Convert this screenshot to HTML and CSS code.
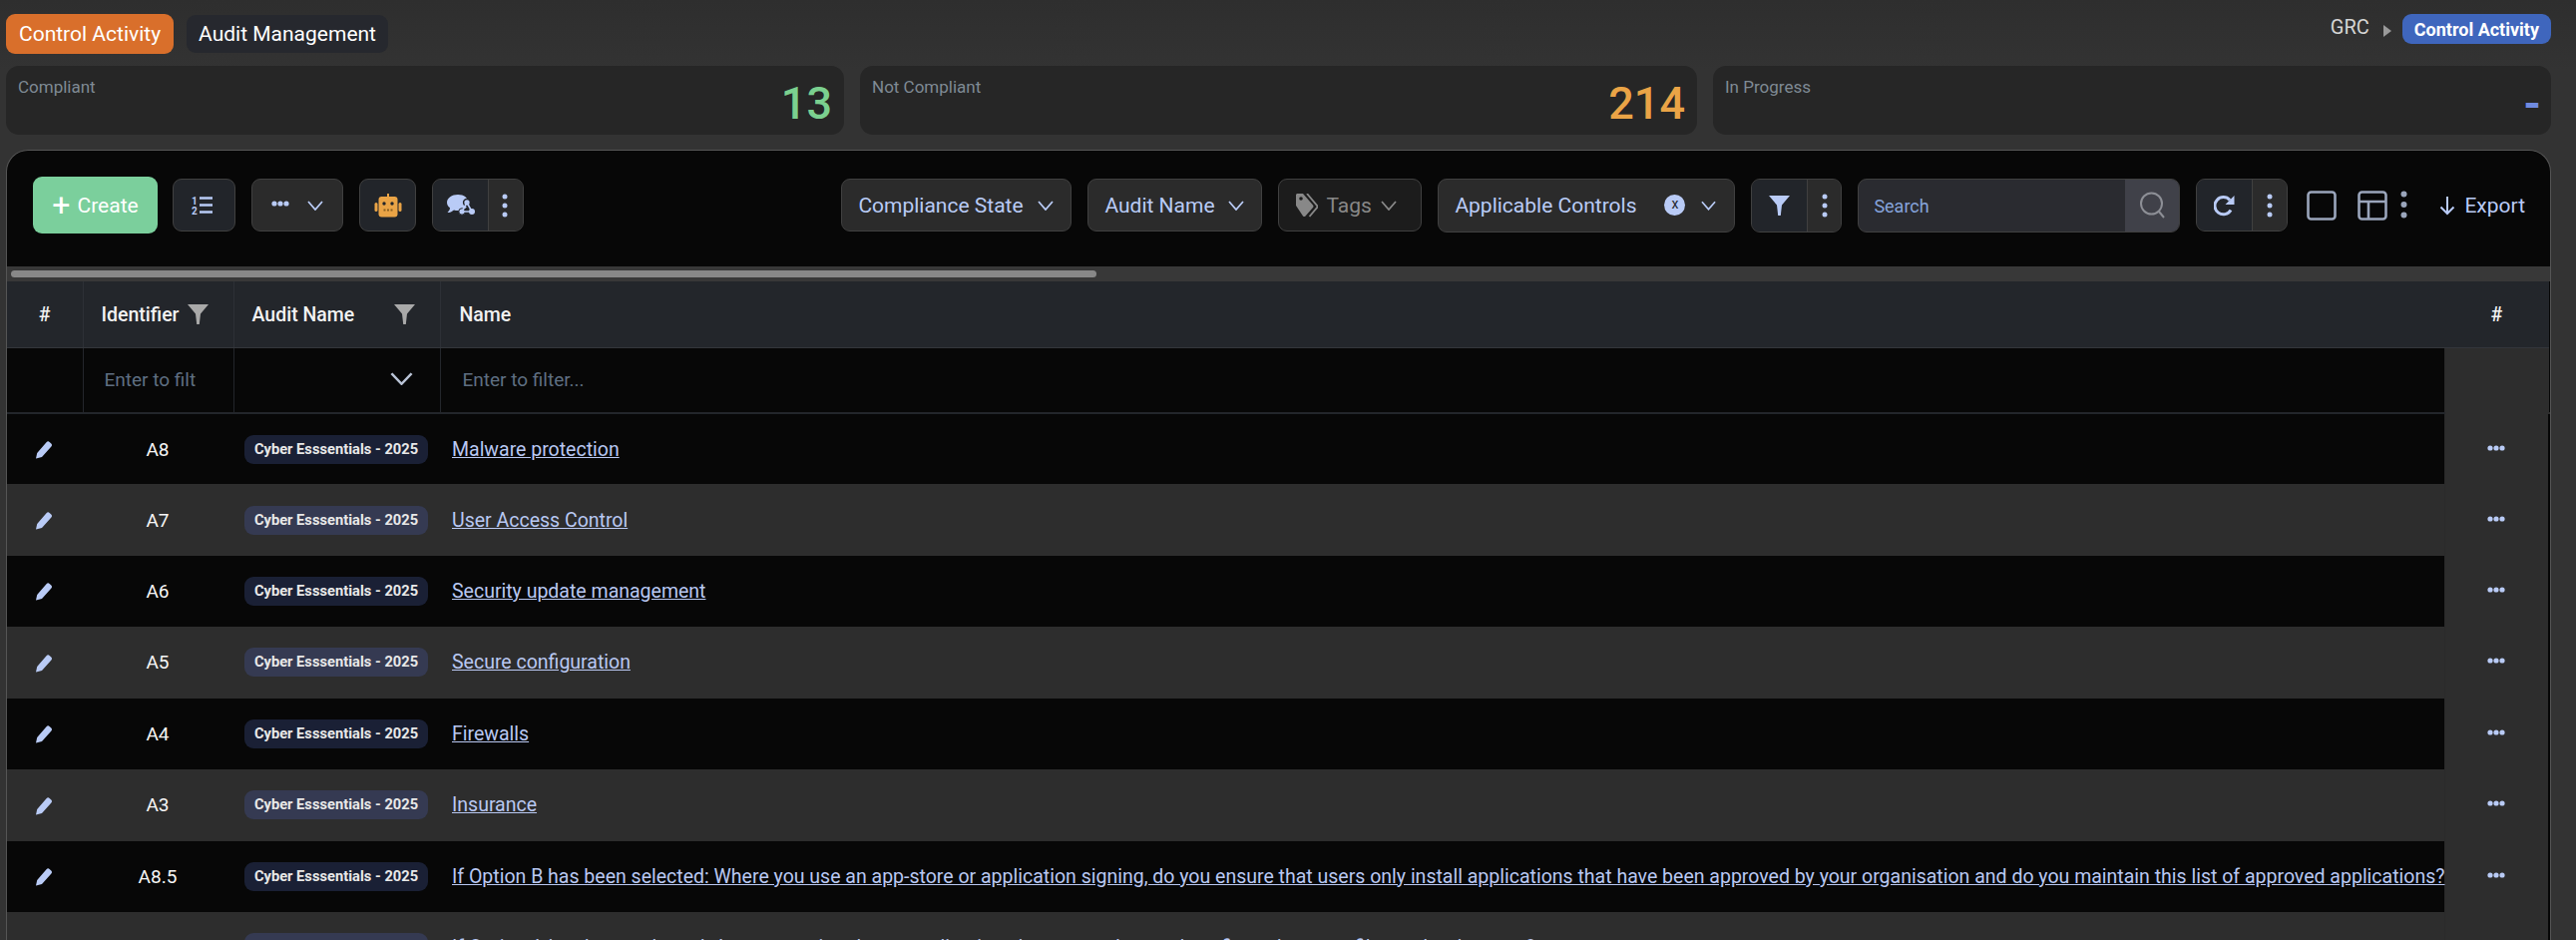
FILE: index.html
```html
<!DOCTYPE html>
<html lang="en">
<head>
<meta charset="utf-8">
<title>Control Activity</title>
<link rel="stylesheet" href="styles.css">
</head>
<body>
<svg class="defs" width="0" height="0" aria-hidden="true">
  <defs>
    <symbol id="chev" viewBox="0 0 16 10"><path d="M1 1l7 8 7-8" fill="none" stroke="currentColor" stroke-width="1.8"/></symbol>
    <symbol id="funnel" viewBox="0 0 21 20"><path d="M0 0h21l-8 9.5-1.2 10.500h-2.600L8 9.500z" fill="currentColor"/></symbol>
    <symbol id="pencil" viewBox="0 0 18 18"><path d="M1 17.500l1.200-5.500L11.500 1.200c.9-1 2.200-1.100 3.100-.3l1.700 1.500c.9.8 1 2.100.1 3.100L7 16z" fill="currentColor"/></symbol>
    <symbol id="dots3" viewBox="0 0 6 24"><circle cx="3" cy="3" r="2.500" fill="currentColor"/><circle cx="3" cy="12" r="2.500" fill="currentColor"/><circle cx="3" cy="21" r="2.500" fill="currentColor"/></symbol>
    <symbol id="dotsh" viewBox="0 0 18 6"><circle cx="3" cy="3" r="2.600" fill="currentColor"/><circle cx="9" cy="3" r="2.600" fill="currentColor"/><circle cx="15" cy="3" r="2.600" fill="currentColor"/></symbol>
  </defs>
</svg>

<header class="topbar">
  <nav class="tabs">
    <span class="tab tab-active">Control Activity</span>
    <span class="tab">Audit Management</span>
  </nav>
  <div class="crumbs">
    <span class="crumb-root">GRC</span>
    <span class="crumb-arrow"></span>
    <span class="crumb-current">Control Activity</span>
  </div>
</header>

<section class="cards">
  <div class="card"><span class="card-label">Compliant</span><span class="card-value green">13</span></div>
  <div class="card"><span class="card-label">Not Compliant</span><span class="card-value orange">214</span></div>
  <div class="card"><span class="card-label">In Progress</span><span class="card-value blue">-</span></div>
</section>

<main class="panel">
  <div class="toolbar">
    <div class="tool-group">
      <button class="create"><span class="plus">+</span>Create</button>
      <button class="btn btn-dark btn-list">
        <svg width="22" height="20" viewBox="0 0 22 20"><text x="0" y="8.500" class="num">1</text><text x="0" y="19" class="num">2</text><path d="M8 2.500h13M8 9.500h13M8 16.500h13" stroke="currentColor" stroke-width="2.600"/></svg>
      </button>
      <button class="btn btn-more">
        <svg class="dh" width="18" height="6"><use href="#dotsh"/></svg>
        <svg width="16" height="10"><use href="#chev"/></svg>
      </button>
      <button class="btn btn-dark btn-robot">
        <svg width="28" height="24" viewBox="0 0 28 24"><rect x="13" y="0" width="2" height="4" fill="#eaa446"/><rect x="4.500" y="3" width="19" height="20.500" rx="3" fill="#eaa446"/><rect x="0.500" y="9" width="3" height="9" rx="1.500" fill="#eaa446"/><rect x="24.500" y="9" width="3" height="9" rx="1.500" fill="#eaa446"/><circle cx="10" cy="10" r="1.700" fill="#22252a"/><circle cx="18" cy="10" r="1.700" fill="#22252a"/><path d="M9.500 16.500h9" stroke="#8a5f20" stroke-width="2" stroke-dasharray="2 1.500"/></svg>
      </button>
      <div class="split">
        <button class="split-main split-chat">
          <svg width="28" height="21" viewBox="0 0 28 21"><path d="M11 0c6 0 10.500 3.500 10.500 8s-4.500 8-10.500 8c-1.500 0-2.800-.2-4-.6C5 17 3 18 .5 18 2 16.500 3 15 3 13.300 1.200 11.900 0 10.100 0 8 0 3.500 5 0 11 0z" fill="currentColor"/><circle cx="20" cy="8" r="3.400" fill="currentColor" stroke="#22252a" stroke-width="1.500"/><circle cx="15" cy="17" r="3.200" fill="currentColor" stroke="#22252a" stroke-width="1"/><circle cx="25" cy="17" r="3" fill="currentColor"/><path d="M20 8l-5 9h10z" fill="none" stroke="currentColor" stroke-width="1.600"/></svg>
        </button>
        <button class="split-more"><svg width="6" height="24"><use href="#dots3"/></svg></button>
      </div>
    </div>

    <div class="tool-group">
      <button class="select sel-state">Compliance State<svg width="16" height="10"><use href="#chev"/></svg></button>
      <button class="select sel-audit">Audit Name<svg width="16" height="10"><use href="#chev"/></svg></button>
      <button class="select sel-tags">
        <svg class="tag-icon" width="22" height="24" viewBox="0 0 22 24"><path d="M0 1.500C0 .7.700 0 1.500 0H7l10 11.500c.7.800.7 1.800 0 2.500l-7.500 8.500c-.7.800-1.800.8-2.500 0L0 12z" fill="currentColor"/><path d="M11 0l10 11.800c.7.800.7 1.600 0 2.400l-7.500 8.800" fill="none" stroke="currentColor" stroke-width="1.800"/><circle cx="5" cy="5" r="1.800" fill="#1c1c1c"/></svg>
        Tags<svg width="16" height="10"><use href="#chev"/></svg>
      </button>
      <button class="select sel-applicable">
        <span>Applicable Controls</span>
        <span class="clear">x</span>
        <svg width="15" height="10"><use href="#chev"/></svg>
      </button>
      <div class="split split-filter">
        <button class="split-main"><svg width="21" height="20"><use href="#funnel"/></svg></button>
        <button class="split-more"><svg width="6" height="24"><use href="#dots3"/></svg></button>
      </div>
      <div class="search">
        <input class="search-input" type="text" placeholder="Search">
        <button class="search-btn"><svg width="27" height="27" viewBox="0 0 27 27"><circle cx="12.500" cy="12" r="10.500" fill="none" stroke="currentColor" stroke-width="2"/><path d="M20 20l5 6" stroke="currentColor" stroke-width="2"/></svg></button>
      </div>
      <div class="split">
        <button class="split-main">
          <svg width="21" height="22" viewBox="0 0 21 22"><path d="M17 15.500A8.600 8.600 0 1 1 16 5.500" fill="none" stroke="currentColor" stroke-width="3"/><path d="M20.500 1v9h-9z" fill="currentColor"/></svg>
        </button>
        <button class="split-more"><svg width="6" height="24"><use href="#dots3"/></svg></button>
      </div>
      <div class="view-tools">
        <svg width="30" height="30" viewBox="0 0 30 30"><rect x="1.500" y="1.500" width="27" height="27" rx="3" fill="none" stroke="currentColor" stroke-width="2.600"/></svg>
        <svg class="view-layout" width="30" height="30" viewBox="0 0 30 30"><rect x="1.500" y="1.500" width="27" height="27" rx="3" fill="none" stroke="currentColor" stroke-width="2.600"/><path d="M1.500 11h27M11 11v17" fill="none" stroke="currentColor" stroke-width="2.600"/></svg>
        <svg class="view-dots" width="7" height="28" viewBox="0 0 7 28"><circle cx="3.500" cy="3.500" r="3" fill="currentColor"/><circle cx="3.500" cy="14" r="3" fill="currentColor"/><circle cx="3.500" cy="24.500" r="3" fill="currentColor"/></svg>
      </div>
      <button class="export">
        <svg width="16" height="20" viewBox="0 0 16 20"><path d="M8 1v17M1.500 11.500L8 18l6.500-6.500" fill="none" stroke="currentColor" stroke-width="2"/></svg>
        Export
      </button>
    </div>
  </div>

  <div class="scrolltrack"><div class="scrollthumb"></div></div>

  <table class="grid">
    <colgroup>
      <col class="c-edit"><col class="c-id"><col class="c-audit"><col class="c-name"><col class="c-menu">
    </colgroup>
    <thead>
      <tr class="head">
        <th>#</th>
        <th class="th-left th-id"><span>Identifier</span><svg width="21" height="20"><use href="#funnel"/></svg></th>
        <th class="th-left th-audit"><span>Audit Name</span><svg width="21" height="20"><use href="#funnel"/></svg></th>
        <th class="th-left th-name">Name</th>
        <th class="th-menu">#</th>
      </tr>
      <tr class="filter">
        <td></td>
        <td><input class="filter-input" type="text" placeholder="Enter to filt"></td>
        <td class="filter-select"><svg width="23" height="13" viewBox="0 0 16 10" preserveAspectRatio="none"><use href="#chev"/></svg></td>
        <td><input class="filter-input filter-name" type="text" placeholder="Enter to filter..."></td>
        <td class="menu"></td>
      </tr>
    </thead>
    <tbody>
      <tr><td class="edit"><svg width="18" height="18"><use href="#pencil"/></svg></td><td class="ident">A8</td><td class="audit"><span class="pill">Cyber Esssentials - 2025</span></td><td class="name"><a href="#">Malware protection</a></td><td class="menu"><svg width="18" height="6"><use href="#dotsh"/></svg></td></tr>
      <tr><td class="edit"><svg width="18" height="18"><use href="#pencil"/></svg></td><td class="ident">A7</td><td class="audit"><span class="pill">Cyber Esssentials - 2025</span></td><td class="name"><a href="#">User Access Control</a></td><td class="menu"><svg width="18" height="6"><use href="#dotsh"/></svg></td></tr>
      <tr><td class="edit"><svg width="18" height="18"><use href="#pencil"/></svg></td><td class="ident">A6</td><td class="audit"><span class="pill">Cyber Esssentials - 2025</span></td><td class="name"><a href="#">Security update management</a></td><td class="menu"><svg width="18" height="6"><use href="#dotsh"/></svg></td></tr>
      <tr><td class="edit"><svg width="18" height="18"><use href="#pencil"/></svg></td><td class="ident">A5</td><td class="audit"><span class="pill">Cyber Esssentials - 2025</span></td><td class="name"><a href="#">Secure configuration</a></td><td class="menu"><svg width="18" height="6"><use href="#dotsh"/></svg></td></tr>
      <tr><td class="edit"><svg width="18" height="18"><use href="#pencil"/></svg></td><td class="ident">A4</td><td class="audit"><span class="pill">Cyber Esssentials - 2025</span></td><td class="name"><a href="#">Firewalls</a></td><td class="menu"><svg width="18" height="6"><use href="#dotsh"/></svg></td></tr>
      <tr><td class="edit"><svg width="18" height="18"><use href="#pencil"/></svg></td><td class="ident">A3</td><td class="audit"><span class="pill">Cyber Esssentials - 2025</span></td><td class="name"><a href="#">Insurance</a></td><td class="menu"><svg width="18" height="6"><use href="#dotsh"/></svg></td></tr>
      <tr><td class="edit"><svg width="18" height="18"><use href="#pencil"/></svg></td><td class="ident">A8.5</td><td class="audit"><span class="pill">Cyber Esssentials - 2025</span></td><td class="name"><a href="#">If Option B has been selected: Where you use an app-store or application signing, do you ensure that users only install applications that have been approved by your organisation and do you maintain this list of approved applications?</a></td><td class="menu"><svg width="18" height="6"><use href="#dotsh"/></svg></td></tr>
      <tr><td class="edit"><svg width="18" height="18"><use href="#pencil"/></svg></td><td class="ident">A8.4</td><td class="audit"><span class="pill">Cyber Esssentials - 2025</span></td><td class="name"><a href="#">If Option A has been selected: Are your anti-malware applications kept up to date and configured to scan files and web pages?</a></td><td class="menu"><svg width="18" height="6"><use href="#dotsh"/></svg></td></tr>
    </tbody>
  </table>
</main>
</body>
</html>
```

FILE: styles.css
```css
* { box-sizing: border-box; }
html, body { margin: 0; height: 942px; overflow: hidden; }
body {
  background: #333333;
  font-family: Roboto, "Liberation Sans", sans-serif;
  color: #fff;
  padding: 14px 25px 0 6px;
  background-image: linear-gradient(#2e2e2e, #333 70px);
}
button { font-family: inherit; cursor: pointer; }
.defs { position: absolute; }

.topbar { display: flex; justify-content: space-between; align-items: flex-start; height: 52px; }
.tabs { display: flex; gap: 13px; align-items: center; height: 40px; }
.tab {
  height: 38px; padding: 0 12px; display: flex; align-items: center;
  background: #26282e; border-radius: 9px; font-size: 21px; font-weight: 400;
}
.tab-active { height: 40px; padding: 0 13px; background: #d96f2b; }
.crumbs { display: flex; align-items: center; height: 30px; }
.crumb-root { font-size: 20px; color: #d5d5d5; margin-top: -4px; }
.crumb-arrow { width: 0; height: 0; margin: 4px 11px 0 14px; border-left: 8px solid #9a9a9a; border-top: 6px solid transparent; border-bottom: 6px solid transparent; }
.crumb-current { height: 30px; padding: 0 12px; display: flex; align-items: center; background: #3f66bd; border-radius: 9px; font-size: 18px; font-weight: 700; }

.cards { display: grid; grid-template-columns: 840px 839px 840px; gap: 16px; height: 69px; }
.card {
  position: relative; background: #262626; border-radius: 13px;
  display: flex; justify-content: space-between; padding: 10px 12px 0 12px;
}
.card-label { font-size: 17px; line-height: 22px; color: #7f8a94; }
.card-value { font-size: 45px; line-height: 50px; font-weight: 500; margin-top: 3px; }
.green { color: #7bd08f; }
.orange { color: #eaa446; }
.blue { color: #6f8ae0; font-weight: 700; margin-right: -2px; }

.panel {
  margin-top: 15px; width: 2551px; height: 792px; background: #070707;
  border: 1px solid #555; border-bottom: 0; border-radius: 22px 22px 0 0; overflow: hidden;
}
.toolbar { height: 116px; display: flex; justify-content: space-between; align-items: center; padding: 0 0 7px 26px; }
.tool-group { display: flex; align-items: center; gap: 16px; }

.btn, .select, .split, .search {
  height: 53px; border: 1px solid #404040; border-radius: 9px; background: #2b2b2b; color: #b9cbf6;
  display: flex; align-items: center;
}
.btn { justify-content: center; padding: 0; }
.btn-dark { background: #22252a; }
.create {
  width: 125px; height: 57px; margin-right: -1px; border: 0; border-radius: 9px; background: #7bcf9c; color: #fff;
  font-size: 21px; display: flex; align-items: center; justify-content: center; gap: 7px; padding: 0;
}
.plus { font-size: 32px; line-height: 30px; font-weight: 400; margin-top: -2px; }
.btn-list { width: 63px; }
.btn-list svg { margin-right: 3px; }
.num { font: 700 10px Roboto, sans-serif; fill: currentColor; }
.btn-more { width: 92px; gap: 18px; }
.dh { margin-top: -4px; }
.btn-robot { width: 57px; }

.split { overflow: hidden; background: #2b2b2b; }
.split-main, .split-more { border: 0; height: 100%; display: flex; align-items: center; justify-content: center; padding: 0; color: inherit; }
.split-main { width: 56px; background: #22252a; border-right: 1px solid #404040; }
.split-more { width: 34px; background: #2b2b2b; }
.split-chat + .split-more { padding-right: 2px; }

.select { padding: 0 0 0 16px; font-size: 21px; }
.sel-state { width: 231px; gap: 14px; }
.sel-audit { width: 175px; gap: 13px; }
.sel-tags { width: 144px; background: #1c1c1c; color: #888; padding-left: 17px; gap: 9px; }
.tag-icon { margin-right: -1px; }
.sel-applicable { width: 298px; height: 54px; }
.clear {
  width: 21px; height: 21px; border-radius: 50%; background: #b9cbf6; color: #22252a;
  font-size: 14px; line-height: 19px; text-align: center; margin: 0 16px 0 28px;
}
.split-filter { height: 54px; }
.split-filter .split-more { width: 33px; }
.search { width: 323px; height: 54px; background: #2a2b30; overflow: hidden; }
.search-input {
  flex: 1; min-width: 0; height: 100%; border: 0; background: transparent; padding: 2px 0 0 15px;
  font: 400 18px Roboto, sans-serif; color: #fff; outline: none;
}
.search-input::placeholder { color: #86a4dc; opacity: 1; }
.search-btn { width: 54px; height: 100%; border: 0; background: #404149; color: #8d8f96; padding: 0; display: flex; align-items: center; justify-content: center; }

.view-tools { display: flex; align-items: center; color: #9aa5bb; margin-left: 3px; }
.view-layout { margin-left: 21px; }
.view-dots { margin-left: 13px; margin-top: -2px; }
.export {
  display: flex; align-items: center; gap: 9px; border: 0; background: transparent; color: #b9cbf6;
  font-size: 21px; padding: 0; margin: 0 25px 0 16px;
}

.scrolltrack { height: 15px; background: #383838; padding: 4px 0 0 4px; }
.scrollthumb { width: 1088px; height: 7px; background: #888; border-radius: 4px; }

.grid { width: 2549px; table-layout: fixed; border-collapse: collapse; }
.c-edit { width: 76px; }
.c-id { width: 151px; }
.c-audit { width: 207px; }
.c-menu { width: 105px; }
.head th {
  height: 66px; background: #23262b; font-size: 19.5px; font-weight: 500; color: #f2f2f2;
  border-right: 1px solid #2d3036; border-bottom: 1px solid #33363b; padding: 2px 0 0;
}
.head th:nth-child(n+4) { border-right: 0; }
.th-left { text-align: left; }
.head svg { color: #a9a9a9; vertical-align: -3px; }
.th-id { padding-left: 18px !important; }
.th-id svg { margin-left: 8px; }
.th-audit { padding-left: 18px !important; }
.th-audit svg { margin-left: 40px; }
.th-name { padding-left: 19px !important; }
.th-menu { text-align: center; }

.filter td { height: 66px; padding: 0; border-bottom: 2px solid #23262b; border-right: 1px solid #23262b; }
.filter td:nth-child(n+4) { border-right: 0; }
.filter-input {
  display: block; width: 100%; height: 40px; border: 0; background: transparent; padding: 0 0 0 21px;
  font: 400 19px Roboto, sans-serif; outline: none; color: #fff;
}
.filter-input::placeholder { color: #5f6f82; opacity: 1; }
.filter-select { text-align: right; padding-right: 27px !important; color: #b9c3d6; }
.filter-name { padding-left: 22px; }

tbody tr { height: 71.43px; }
tbody td { padding: 0; }
tbody tr:nth-child(odd) td { background: #070707; }
tbody tr:nth-child(even) td { background: #2d2d2d; }
.edit { text-align: center; color: #b9cbf6; padding-right: 3px !important; }
.edit svg { vertical-align: middle; }
.ident { text-align: center; font-size: 19px; color: #f6f6f6; padding-right: 1px !important; }
.audit { padding-left: 11px !important; }
.pill {
  display: inline-block; width: 184px; height: 29px; line-height: 28px; text-align: center;
  background: #1a2035; border-radius: 9px; font-size: 14.7px; font-weight: 700; color: #e8e8e8;
}
tbody tr:nth-child(even) .pill { background: #353a52; }
.name { padding-left: 12px !important; white-space: nowrap; font-size: 19.5px; }
.name a { color: #b9c8f2; }
tbody tr td.menu, .filter .menu { background: #2d2d2d; text-align: center; color: #b9cbf6; border-left: 1px solid #2a2a2a; border-right: 2px solid #060606; }
.menu svg { display: block; margin: -3px auto 0; }
.filter .menu { border-bottom-color: #2d2d2d; border-right: 0; }
```
